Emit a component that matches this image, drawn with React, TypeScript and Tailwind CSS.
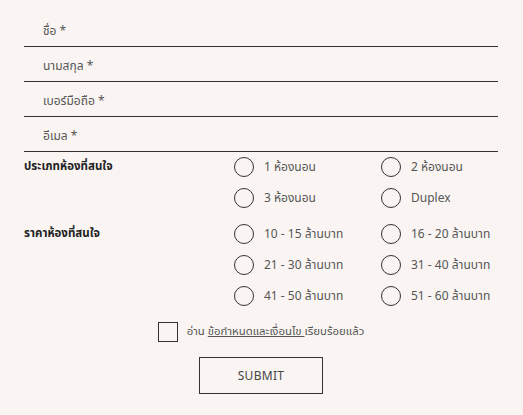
const font = { fontFamily: '"Noto Sans Thai", "Noto Sans", "Liberation Sans", sans-serif' }

const fields = ['ชื่อ *', 'นามสกุล *', 'เบอร์มือถือ *', 'อีเมล *']

const groups = [
  {
    label: 'ประเภทห้องที่สนใจ',
    options: ['1 ห้องนอน', '2 ห้องนอน', '3 ห้องนอน', 'Duplex'],
  },
  {
    label: 'ราคาห้องที่สนใจ',
    options: [
      '10 - 15 ล้านบาท',
      '16 - 20 ล้านบาท',
      '21 - 30 ล้านบาท',
      '31 - 40 ล้านบาท',
      '41 - 50 ล้านบาท',
      '51 - 60 ล้านบาท',
    ],
  },
]

export default function App() {
  return (
    <div
      className="w-[523px] h-[415px] bg-[#faf5f2] pl-[24px] pr-[25px] pt-[12px] text-[12px] text-[#555]"
      style={font}
    >
      <div className="flex flex-col">
        {fields.map((f) => (
          <div
            key={f}
            className="h-[35px] border-b border-[#333] flex items-end pb-[7px] pl-[19px] leading-[16px]"
          >
            {f}
          </div>
        ))}
      </div>

      <div className="flex flex-col gap-[16px] mt-[5px]">
        {groups.map((g) => (
          <div key={g.label} className="flex">
            <div className="w-[210px] shrink-0 font-bold text-[#222] text-[11.5px] leading-[20px]">
              {g.label}
            </div>
            <div className="grid grid-cols-[147px_1fr] gap-y-[11px]">
              {g.options.map((o) => (
                <label key={o} className="flex items-center gap-[10px] h-[20px]">
                  <span className="w-[20px] h-[20px] rounded-full border border-[#333] shrink-0" />
                  <span className="leading-[16px]">{o}</span>
                </label>
              ))}
            </div>
          </div>
        ))}
      </div>

      <div className="flex justify-center items-center gap-[9px] mt-[16px]">
        <span className="w-[20px] h-[20px] border border-[#333]" />
        <span className="leading-[16px] text-[11.4px]">
          อ่าน <span className="underline">ข้อกำหนดและเงื่อนไข </span>เรียบร้อยแล้ว
        </span>
      </div>

      <div className="flex justify-center mt-[15px]">
        <button
          type="button"
          className="w-[124px] h-[37px] border border-[#333] text-[12px] text-[#444] tracking-wide"
        >
          SUBMIT
        </button>
      </div>
    </div>
  )
}
